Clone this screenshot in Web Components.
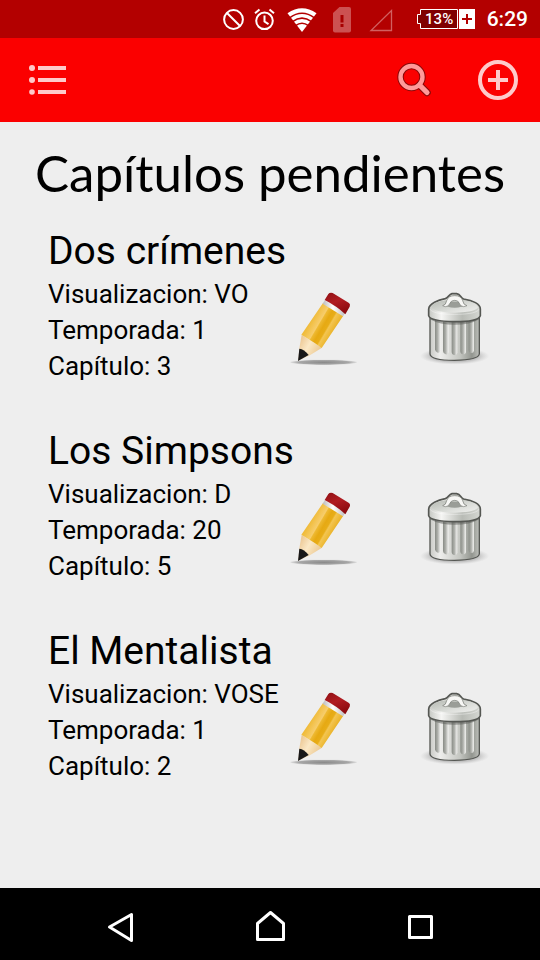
<!DOCTYPE html>
<html lang="es">
<head>
<meta charset="utf-8">
<meta name="viewport" content="width=device-width, initial-scale=1">
<title>Capítulos pendientes</title>
<style>
  body { margin: 0; background: #eee; color: #000; font-family: Roboto, "Noto Sans", sans-serif; }
</style>
</head>
<body>
<pending-app></pending-app>

<template id="status-bar">
  <style>
    :host { display: flex; align-items: center; justify-content: flex-end; height: 38px; padding-right: 12px; background: #b30000; color: #fff; }
    svg { display: block; fill: none; stroke: #fff; stroke-width: 2; }
    .battery { display: flex; align-items: center; margin: 0 12px 0 15px; height: 20px; gap: 1px; }
    .level { position: relative; display: flex; }
    .level span { position: absolute; inset: 0 0 0 4px; display: grid; place-items: center; font-size: 15px; line-height: 20px; font-weight: 500; }
    time { font-size: 21px; line-height: 38px; font-weight: 500; }
  </style>
  <svg width="31" height="38" viewBox="0 0 31 38"><circle cx="15.5" cy="19.5" r="9.4"/><path d="M9 13l13 13"/></svg>
  <svg width="31" height="38" viewBox="0 0 31 38"><circle cx="15.5" cy="20.8" r="8.3"/><path d="M15.5 15.5v6l4 2.600M6 13.300l4.500-3.800M25 13.300l-4.500-3.800"/></svg>
  <svg width="44" height="38" viewBox="0 0 44 38"><path fill="#fff" stroke="none" d="M7.500 13.300Q22 3.300 36.500 13.300L22 32z"/><path stroke="#b30000" stroke-width="1.600" d="M9.500 17.800Q22 8.600 34.500 17.800M12.500 21.700Q22 14.600 31.500 21.700M15.500 25.600Q22 20.800 28.500 25.600"/></svg>
  <svg width="36" height="38" viewBox="0 0 36 38"><path fill="#cc5151" stroke="none" d="M15.500 7H25a2 2 0 0 1 2 2v21.500a2 2 0 0 1-2 2H11a2 2 0 0 1-2-2V13z"/><path stroke="#a80000" stroke-width="3" d="M18 15v7.500M18 24v3"/></svg>
  <svg width="42" height="38" viewBox="0 0 42 38"><path stroke="#d16060" stroke-width="1.300" d="M31.500 10.500v20H11z"/></svg>
  <div class="battery">
    <div class="level">
      <svg width="41" height="20" viewBox="0 0 41 20"><path fill="#800000" stroke-width="1" d="M3.500.500h37v19h-37v-5h-3v-9h3z"/></svg>
      <span>13%</span>
    </div>
    <svg width="16" height="20" viewBox="0 0 16 20"><path fill="#fff" stroke="none" d="M0 0h16v20H0z"/><path stroke="#b30000" d="M3 10h10M8 5v10"/></svg>
  </div>
  <time>6:29</time>
</template>

<template id="app-toolbar">
  <style>
    :host { display: flex; align-items: center; height: 84px; padding: 0 18px 0 24px; gap: 36px; background: #fb0000; }
    button { width: 48px; height: 48px; padding: 0; border: 0; background: none; cursor: pointer; }
    button:first-of-type { margin-right: auto; }
    svg { display: block; fill: none; stroke: #fecaca; stroke-width: 4; }
  </style>
  <button aria-label="Menú"><svg width="48" height="48"><path d="M14 12h28M14 24h28M14 36h28"/><g fill="#fecaca" stroke="none"><circle cx="8" cy="12" r="3"/><circle cx="8" cy="24" r="3"/><circle cx="8" cy="36" r="2.800"/></g></svg></button>
  <button aria-label="Buscar"><svg width="48" height="48" stroke-linecap="round"><g stroke="#8a0808"><circle cx="21.500" cy="21" r="11" stroke-width="6.400"/><path stroke-width="7.400" d="M29.500 29l7.500 7.500"/></g><g stroke="#ff9a9a"><circle cx="21.500" cy="21" r="11" stroke-width="4.400"/><path stroke-width="5.200" d="M29.500 29l7.500 7.500"/></g></svg></button>
  <button aria-label="Añadir"><svg width="48" height="48"><circle cx="24" cy="24" r="18"/><path d="M14 24h20M24 14v20"/></svg></button>
</template>

<template id="episode-item">
  <style>
    :host { display: grid; grid-template-columns: minmax(0, 1fr) 72px 72px; column-gap: 60px; align-items: center; padding: 0 48px 42px; }
    h2 { grid-column: 1 / -1; margin: 0; font-size: 39px; line-height: 50px; font-weight: 400; }
    .details { font-size: 26px; line-height: 36px; white-space: nowrap; }
    button { width: 72px; height: 72px; padding: 0; border: 0; background: none; cursor: pointer; }
    svg { display: block; overflow: visible; }
  </style>
  <h2><slot name="title"></slot></h2>
  <div class="details"><slot></slot></div>
  <button aria-label="Editar">
    <svg width="72" height="72" viewBox="24 42 216 216">
      <defs>
        <radialGradient id="ground"><stop stop-color="#777" stop-opacity=".85"/><stop offset=".75" stop-color="#888" stop-opacity=".7"/><stop offset="1" stop-color="#999" stop-opacity=".2"/></radialGradient>
        <linearGradient id="wood" gradientUnits="userSpaceOnUse" x1="95" y1="120" x2="163" y2="160"><stop stop-color="#f0bc3c"/><stop offset=".3" stop-color="#f7cd6c"/><stop offset=".34" stop-color="#eeb932"/><stop offset=".5" stop-color="#e6a913"/><stop offset=".64" stop-color="#e8ad18"/><stop offset=".7" stop-color="#f3c552"/><stop offset="1" stop-color="#e8ae1b"/></linearGradient>
        <linearGradient id="cone" x1="0" y1="0" x2="1" y2=".6"><stop stop-color="#e7bc82"/><stop offset=".5" stop-color="#fbe8c6"/><stop offset="1" stop-color="#e9c58d"/></linearGradient>
        <linearGradient id="rubber" x1="0" y1="0" x2=".5" y2="1"><stop stop-color="#8f1014"/><stop offset=".5" stop-color="#b01c21"/><stop offset="1" stop-color="#8e0b10"/></linearGradient>
        <linearGradient id="ferrule"><stop stop-color="#bbb"/><stop offset=".45" stop-color="#fff"/><stop offset="1" stop-color="#bcbcbc"/></linearGradient>
      </defs>
      <ellipse cx="131" cy="247" rx="100" ry="8" fill="url(#ground)"/>
      <path fill="url(#cone)" d="M65 165L126 203L87 227L55 242L58 205z"/>
      <path fill="#181818" d="M58 206Q72 207 86 225L54 243z"/>
      <path fill="url(#wood)" d="M129 69L64 164L80 174L104 189L125 204L190 107z"/>
      <path fill="url(#ferrule)" d="M134 61L196 98L189 109L128 71z"/>
      <path fill="url(#rubber)" d="M134 60L145 42Q149 37 158 39L207 69Q212 73 209 80L196 103Q170 78 134 60z"/>
    </svg>
  </button>
  <button aria-label="Borrar">
    <svg width="72" height="72" viewBox="30 42 216 216">
      <defs>
        <radialGradient id="floor"><stop stop-color="#555" stop-opacity=".7"/><stop offset=".7" stop-color="#888" stop-opacity=".4"/><stop offset="1" stop-color="#aaa" stop-opacity="0"/></radialGradient>
        <linearGradient id="can"><stop stop-color="#c9cac6"/><stop offset=".2" stop-color="#eeeeec"/><stop offset=".6" stop-color="#c5c7c2"/><stop offset=".85" stop-color="#92958f"/><stop offset="1" stop-color="#bfc1bc"/></linearGradient>
        <linearGradient id="lid"><stop stop-color="#c5c7c2"/><stop offset=".25" stop-color="#f5f5f3"/><stop offset=".65" stop-color="#b8bbb5"/><stop offset="1" stop-color="#d5d7d2"/></linearGradient>
        <linearGradient id="top" x1="0" y1="0" x2="1" y2="1"><stop stop-color="#b4b8b1"/><stop offset=".6" stop-color="#dcdeda"/><stop offset="1" stop-color="#f0f0ee"/></linearGradient>
        <linearGradient id="rib"><stop stop-color="#888b85"/><stop offset=".5" stop-color="#b0b2ad"/><stop offset=".75" stop-color="#d5d6d3"/><stop offset="1" stop-color="#f0f0ee"/></linearGradient>
      </defs>
      <ellipse cx="134" cy="228" rx="104" ry="26" fill="url(#floor)"/>
      <path fill="url(#can)" stroke="#555753" stroke-width="4" d="M60 105V222Q62 241 133 241Q205 240 208 222V105z"/>
      <g fill="url(#rib)">
        <path d="M75 120h17v92q-2 8-9 6q-8-3-8-10z"/><path d="M99 124h17v93q-2 8-9 6q-8-3-8-10z"/><path d="M125 125h17v94q-2 8-9 6q-8-1-8-10z"/><path d="M151 124h17v93q-2 8-9 6q-8-1-8-10z"/><path d="M176 121h16v91q-2 8-8 7q-8-1-8-10z"/>
      </g>
      <path fill="none" stroke="#555753" stroke-width="9" opacity=".5" d="M62 114Q90 130 134 130T206 114"/>
      <path fill="url(#lid)" stroke="#555753" stroke-width="5" d="M56 87C57 71 85 60 106 56C116 53 116 43 126 41H140C153 43 151 54 161 57C189 61 211 72 211 87V107Q205 125 134 125Q60 124 56 107z"/>
      <path fill="url(#top)" d="M64 82C67 67 96 59 134 59S202 68 204 82C200 92 169 98 134 98S68 92 64 82z"/>
      <path fill="none" stroke="#fff" stroke-width="2" opacity=".6" d="M60 88C70 101 104 103 134 103S198 101 207 88"/>
      <ellipse cx="134" cy="74" rx="28" ry="9" fill="#9a9d97"/>
      <path fill="#f7f7f5" stroke="#777a74" stroke-width="2" d="M98 77Q108 75 110 62Q115 47 134 47Q154 47 158 62Q160 75 171 77L161 80Q151 80 148 70Q145 61 134 61Q123 61 119 71Q116 80 106 80z"/>
    </svg>
  </button>
</template>

<template id="navigation-bar">
  <style>
    :host { display: grid; grid-template-columns: repeat(3, 1fr); height: 72px; padding: 0 8.333%; background: #000; }
    button { display: grid; place-items: center; padding: 0; border: 0; background: none; cursor: pointer; }
    svg { display: block; fill: none; stroke: #fff; stroke-width: 3; stroke-linejoin: round; }
  </style>
  <button aria-label="Atrás"><svg width="40" height="72"><path d="M9.500 39L31.500 26.500v26z"/></svg></button>
  <button aria-label="Inicio"><svg width="40" height="72"><path d="M7.500 51.500v-16L20.500 24.500l13 11v16z"/></svg></button>
  <button aria-label="Recientes"><svg width="40" height="72"><path d="M9.500 28.500h22v21h-22z"/></svg></button>
</template>

<template id="pending-app">
  <style>
    :host { display: flex; flex-direction: column; min-height: 100vh; }
    main { flex: 1; }
    h1 { margin: 0 0 2px; text-align: center; font-family: Lato, sans-serif; font-size: 51px; line-height: 102px; font-weight: 400; }
    p { margin: 0; }
  </style>
  <status-bar></status-bar>
  <app-toolbar></app-toolbar>
  <main>
    <h1>Capítulos pendientes</h1>
    <episode-item><span slot="title">Dos crímenes</span><p>Visualizacion: VO</p><p>Temporada: 1</p><p>Capítulo: 3</p></episode-item>
    <episode-item><span slot="title">Los Simpsons</span><p>Visualizacion: D</p><p>Temporada: 20</p><p>Capítulo: 5</p></episode-item>
    <episode-item><span slot="title">El Mentalista</span><p>Visualizacion: VOSE</p><p>Temporada: 1</p><p>Capítulo: 2</p></episode-item>
  </main>
  <navigation-bar></navigation-bar>
</template>

<script>
  class TemplateElement extends HTMLElement {
    constructor() {
      super();
      const template = document.getElementById(this.localName);
      this.attachShadow({ mode: "open" }).append(template.content.cloneNode(true));
    }
  }
  customElements.define("status-bar", class extends TemplateElement {});
  customElements.define("app-toolbar", class extends TemplateElement {});
  customElements.define("episode-item", class extends TemplateElement {});
  customElements.define("navigation-bar", class extends TemplateElement {});
  customElements.define("pending-app", class extends TemplateElement {});
</script>
</body>
</html>
